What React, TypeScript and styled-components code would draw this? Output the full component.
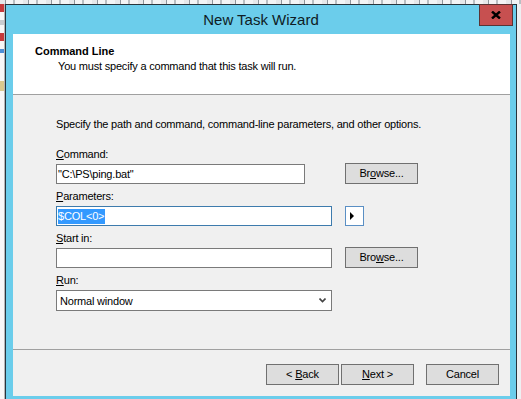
import React from 'react'
import styled, { createGlobalStyle } from 'styled-components'

const GlobalStyle = createGlobalStyle`
  html, body {
    margin: 0;
    padding: 0;
    background: #eef0f2;
  }
  body {
    font-family: "Liberation Sans", Arial, sans-serif;
    font-size: 11px;
    letter-spacing: -0.2px;
    color: #000;
  }
`

const Screen = styled.div`
  width: 521px;
  height: 399px;
  overflow: hidden;
  display: grid;
  grid-template-columns: 5px 512px 1fr;
  grid-template-rows: 4px 1fr;
  background: #eef0f2;
`

const TopStrip = styled.div`
  grid-column: 1 / -1;
  background: repeating-linear-gradient(
    90deg,
    #e6e8ea 0 5px,
    #8e959b 5px 6px,
    #f3f4f5 6px 13px,
    #b9bec2 13px 15px,
    #f3f4f5 15px 23px
  );
`

const LeftStrip = styled.div`
  display: flex;
  flex-direction: column;
  gap: 8px;
  background: #f7f7f7;
  border-right: 1px solid #b5b5b5;
`

const Chip = styled.div<{ $color: string; $h: number }>`
  height: ${p => p.$h}px;
  background: ${p => p.$color};
`

const Window = styled.div`
  display: flex;
  flex-direction: column;
  background: #6bcdeb;
  border: 1px solid #27343c;
  border-bottom: none;
  padding: 0 6px 0 7px;
`

const TitleBar = styled.div`
  display: grid;
  grid-template-columns: 1fr auto 1fr;
  height: 29px;
  margin: 0 -6px 0 -7px;
`

const Title = styled.div`
  grid-column: 2;
  padding-top: 5px;
  letter-spacing: 0;
  font-size: 15px;
  line-height: 20px;
  color: #0f1c24;
`

const CloseButton = styled.div`
  grid-column: 3;
  justify-self: end;
  align-self: start;
  margin: -1px 3px 0 0;
  width: 34px;
  height: 22px;
  box-sizing: border-box;
  background: #c75050;
  border: 1px solid #5a3434;
  display: flex;
  align-items: center;
  justify-content: center;
`

const Client = styled.div`
  width: 497px;
  height: 362px;
  display: flex;
  flex-direction: column;
  background: #f0f0f0;
`

const Header = styled.div`
  height: 50px;
  background: #fff;
  border-bottom: 1px solid #a0a0a0;
  padding: 10px 0 0 22px;
`

const HeaderTitle = styled.div`
  font-weight: bold;
  letter-spacing: 0;
  line-height: 15px;
`

const HeaderSubtitle = styled.div`
  line-height: 15px;
  padding-left: 23px;
`

const Body = styled.div`
  height: 254px;
  box-sizing: border-box;
  padding: 22px 0 0 43px;
`

const Intro = styled.div`
  line-height: 15px;
`

const FieldGrid = styled.div`
  margin-top: 15px;
  display: grid;
  grid-template-columns: 276px 73px;
  column-gap: 13px;
  align-items: start;
`

const Label = styled.div<{ $first?: boolean }>`
  grid-column: 1 / -1;
  line-height: 15px;
  margin: ${p => (p.$first ? 0 : 5)}px 0 2px;
`

const TextBox = styled.div<{ $width?: number; $focused?: boolean }>`
  grid-column: 1;
  width: ${p => (p.$width ? `${p.$width}px` : '100%')};
  height: 20px;
  box-sizing: border-box;
  background: #fff;
  border: 1px solid ${p => (p.$focused ? '#3d7bad' : '#7a7a7a')};
  padding-left: 1px;
  line-height: 18px;
  white-space: nowrap;
  overflow: hidden;
`

const Selected = styled.span`
  display: inline-block;
  line-height: 15px;
  padding-right: 1px;
  background: #3399ff;
  color: #fff;
`

const Button = styled.div<{ $width?: number }>`
  width: ${p => p.$width ?? 73}px;
  height: 21px;
  box-sizing: border-box;
  background: #dddddd;
  border: 1px solid #707070;
  display: flex;
  align-items: center;
  justify-content: center;
  line-height: 15px;
  white-space: pre;
`

const SideButton = styled(Button)`
  grid-column: 2;
  margin-top: -1px;
`

const MenuArrowButton = styled.div`
  grid-column: 2;
  width: 19px;
  height: 20px;
  box-sizing: border-box;
  background: #fff;
  border: 1px solid #5a8fc4;
  display: flex;
  align-items: center;
  padding-left: 4px;
`

const Select = styled.div`
  grid-column: 1;
  height: 21px;
  box-sizing: border-box;
  background: #fff;
  border: 1px solid #7a7a7a;
  display: flex;
  align-items: center;
  justify-content: space-between;
  padding: 0 5px 0 3px;
`

const Footer = styled.div`
  flex: 1;
  border-top: 1px solid #a0a0a0;
  display: flex;
  justify-content: flex-end;
  align-items: flex-start;
  padding: 14px 11px 0 0;
`

const NavGroup = styled.div`
  display: flex;
  gap: 2px;
  margin-right: 12px;
`

const App = () => {
  return (
    <>
      <GlobalStyle />
      <Screen>
        <TopStrip />
        <LeftStrip>
          <Chip $color="#c6393b" $h={8} />
          <Chip $color="#c9ccd0" $h={5} />
          <Chip $color="#c6393b" $h={8} />
          <Chip $color="#4d8fd6" $h={4} />
          <Chip $color="#f7f7f7" $h={12} />
          <Chip $color="#d9c98f" $h={10} />
        </LeftStrip>
        <Window>
          <TitleBar>
            <Title>New Task Wizard</Title>
            <CloseButton>
              <svg width="10" height="8" viewBox="0 0 10 8">
                <path d="M1 0.5 L9 7.5 M9 0.5 L1 7.5" stroke="#000" strokeWidth="2.4" />
              </svg>
            </CloseButton>
          </TitleBar>
          <Client>
            <Header>
              <HeaderTitle>Command Line</HeaderTitle>
              <HeaderSubtitle>You must specify a command that this task will run.</HeaderSubtitle>
            </Header>
            <Body>
              <Intro>Specify the path and command, command-line parameters, and other options.</Intro>
              <FieldGrid>
                <Label $first><u>C</u>ommand:</Label>
                <TextBox $width={249}>"C:\PS\ping.bat"</TextBox>
                <SideButton><span>Br<u>o</u>wse...</span></SideButton>

                <Label><u>P</u>arameters:</Label>
                <TextBox $focused>
                  <Selected>$COL&lt;0&gt;</Selected>
                </TextBox>
                <MenuArrowButton>
                  <svg width="4" height="8" viewBox="0 0 4 8">
                    <path d="M0 0 L4 4 L0 8 Z" fill="#000" />
                  </svg>
                </MenuArrowButton>

                <Label><u>S</u>tart in:</Label>
                <TextBox />
                <SideButton><span>Bro<u>w</u>se...</span></SideButton>

                <Label><u>R</u>un:</Label>
                <Select>
                  <span>Normal window</span>
                  <svg width="7" height="5" viewBox="0 0 7 5">
                    <path d="M0.5 0.5 L3.5 3.5 L6.5 0.5" stroke="#444" strokeWidth="1.6" fill="none" />
                  </svg>
                </Select>
              </FieldGrid>
            </Body>
            <Footer>
              <NavGroup>
                <Button><span>&lt; <u>B</u>ack</span></Button>
                <Button><span><u>N</u>ext &gt;</span></Button>
              </NavGroup>
              <Button>Cancel</Button>
            </Footer>
          </Client>
        </Window>
      </Screen>
    </>
  )
}

export default App
